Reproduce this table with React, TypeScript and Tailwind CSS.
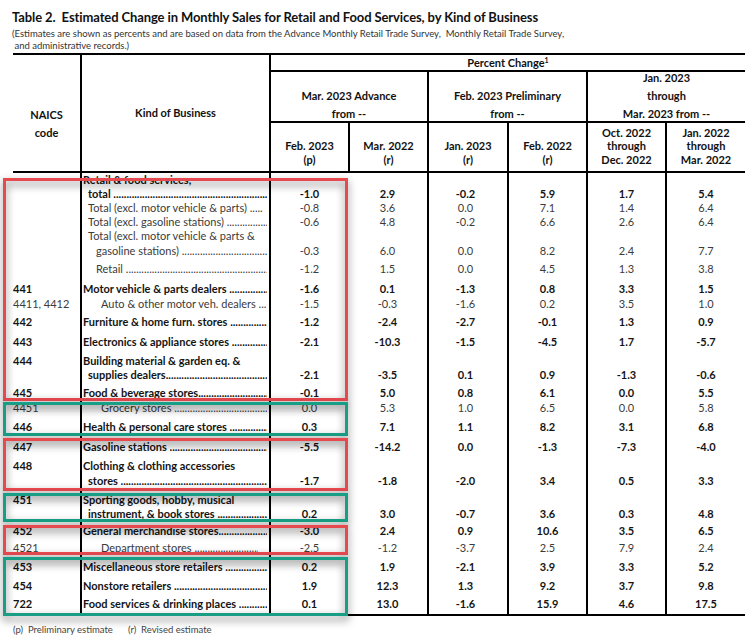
import React from "react";

const COLS = "grid grid-cols-[67px_189px_79px_79px_80px_79px_79px_80px]";

type Line = { t: string; i: number; fill?: boolean; pr?: string };
type Row = {
  h: string;
  lh: string;
  code?: string;
  lines: Line[];
  vals?: string[];
  bold?: boolean;
};

const indent: Record<number, string> = {
  0: "pl-px",
  1: "pl-[6px]",
  2: "pl-[14px]",
  3: "pl-[19px]",
};

const rows: Row[] = [
  { h: "h-[14px]", lh: "leading-[14px]", bold: true, lines: [{ t: "Retail & food services,", i: 0 }] },
  { h: "h-[14px]", lh: "leading-[14px]", bold: true, lines: [{ t: "total ", i: 1, fill: true }], vals: ["-1.0", "2.9", "-0.2", "5.9", "1.7", "5.4"] },
  { h: "h-[13px]", lh: "leading-[13px]", lines: [{ t: "Total (excl. motor vehicle & parts) .....", i: 1 }], vals: ["-0.8", "3.6", "0.0", "7.1", "1.4", "6.4"] },
  { h: "h-[15px]", lh: "leading-[15px]", lines: [{ t: "Total (excl. gasoline stations) ", i: 1, fill: true }], vals: ["-0.6", "4.8", "-0.2", "6.6", "2.6", "6.4"] },
  {
    h: "h-[29px]",
    lh: "leading-[14.5px]",
    lines: [
      { t: "Total (excl. motor vehicle & parts &", i: 1 },
      { t: "gasoline stations) ", i: 2, fill: true },
    ],
    vals: ["-0.3", "6.0", "0.0", "8.2", "2.4", "7.7"],
  },
  { h: "h-[22px]", lh: "leading-[14px]", lines: [{ t: "Retail ", i: 2, fill: true }], vals: ["-1.2", "1.5", "0.0", "4.5", "1.3", "3.8"] },
  { h: "h-[17px]", lh: "leading-[14px]", bold: true, code: "441", lines: [{ t: "Motor vehicle & parts dealers ", i: 0, fill: true }], vals: ["-1.6", "0.1", "-1.3", "0.8", "3.3", "1.5"] },
  { h: "h-[13px]", lh: "leading-[13px]", code: "4411, 4412", lines: [{ t: "Auto & other motor veh. dealers ...", i: 3 }], vals: ["-1.5", "-0.3", "-1.6", "0.2", "3.5", "1.0"] },
  { h: "h-[23px]", lh: "leading-[14px]", bold: true, code: "442", lines: [{ t: "Furniture & home furn. stores ", i: 0, fill: true }], vals: ["-1.2", "-2.4", "-2.7", "-0.1", "1.3", "0.9"] },
  { h: "h-[18px]", lh: "leading-[14px]", bold: true, code: "443", lines: [{ t: "Electronics & appliance stores ", i: 0, fill: true }], vals: ["-2.1", "-10.3", "-1.5", "-4.5", "1.7", "-5.7"] },
  {
    h: "h-[33px]",
    lh: "leading-[13.5px]",
    bold: true,
    code: "444",
    lines: [
      { t: "Building material & garden eq. &", i: 0 },
      { t: "supplies dealers", i: 1, fill: true },
    ],
    vals: ["-2.1", "-3.5", "0.1", "0.9", "-1.3", "-0.6"],
  },
  { h: "h-[18px]", lh: "leading-[14px]", bold: true, code: "445", lines: [{ t: "Food & beverage stores", i: 0, fill: true }], vals: ["-0.1", "5.0", "0.8", "6.1", "0.0", "5.5"] },
  { h: "h-[12px]", lh: "leading-[12px]", code: "4451", lines: [{ t: "Grocery stores ", i: 3, fill: true }], vals: ["0.0", "5.3", "1.0", "6.5", "0.0", "5.8"] },
  { h: "h-[26px]", lh: "leading-[14px]", bold: true, code: "446", lines: [{ t: "Health & personal care stores ", i: 0, fill: true }], vals: ["0.3", "7.1", "1.1", "8.2", "3.1", "6.8"] },
  { h: "h-[14px]", lh: "leading-[14px]", bold: true, code: "447", lines: [{ t: "Gasoline stations ", i: 0, fill: true }], vals: ["-5.5", "-14.2", "0.0", "-1.3", "-7.3", "-4.0"] },
  {
    h: "h-[39px]",
    lh: "leading-[14.5px]",
    bold: true,
    code: "448",
    lines: [
      { t: "Clothing & clothing accessories", i: 0 },
      { t: "stores ", i: 1, fill: true },
    ],
    vals: ["-1.7", "-1.8", "-2.0", "3.4", "0.5", "3.3"],
  },
  {
    h: "h-[27px]",
    lh: "leading-[14px]",
    bold: true,
    code: "451",
    lines: [
      { t: "Sporting goods, hobby, musical", i: 0 },
      { t: "instrument, & book stores ", i: 1, fill: true },
    ],
    vals: ["0.2", "3.0", "-0.7", "3.6", "0.3", "4.8"],
  },
  { h: "h-[21px]", lh: "leading-[14px]", bold: true, code: "452", lines: [{ t: "General merchandise stores", i: 0, fill: true }], vals: ["-3.0", "2.4", "0.9", "10.6", "3.5", "6.5"] },
  { h: "h-[14px]", lh: "leading-[14px]", code: "4521", lines: [{ t: "Department stores ", i: 3, fill: true, pr: "pr-[9px]" }], vals: ["-2.5", "-1.2", "-3.7", "2.5", "7.9", "2.4"] },
  { h: "h-[24px]", lh: "leading-[14px]", bold: true, code: "453", lines: [{ t: "Miscellaneous store retailers ", i: 0, fill: true }], vals: ["0.2", "1.9", "-2.1", "3.9", "3.3", "5.2"] },
  { h: "h-[14px]", lh: "leading-[14px]", bold: true, code: "454", lines: [{ t: "Nonstore retailers ", i: 0, fill: true }], vals: ["1.9", "12.3", "1.3", "9.2", "3.7", "9.8"] },
  { h: "h-[21px]", lh: "leading-[14px]", bold: true, code: "722", lines: [{ t: "Food services & drinking places ", i: 0, fill: true }], vals: ["0.1", "13.0", "-1.6", "15.9", "4.6", "17.5"] },
];

const DOTS = ".".repeat(90);

// vertical rule for each of the 8 body columns (no rule between the two Advance columns)
const bodyRule = ["", "border-l-2", "border-l-2", "", "border-l-2", "border-l-2", "border-l-2", "border-l-2"];

function BodyRow({ row }: { row: Row }) {
  const n = row.lines.length;
  const slots = Array.from({ length: n });
  const tone = row.bold ? "font-bold text-[#141414]" : "text-[#3b3b3b]";
  return (
    <div className={`${COLS} ${row.h} ${tone} ${row.lh}`}>
      {/* code */}
      <div className="flex flex-col justify-center">
        {slots.map((_, k) => (
          <div key={k} className="whitespace-nowrap">
            {k === 0 ? row.code ?? "\u00a0" : "\u00a0"}
          </div>
        ))}
      </div>
      {/* label */}
      <div className="flex flex-col justify-center border-l-2 border-black pr-[2px] min-w-0">
        {row.lines.map((l, k) => (
          <div key={k} className={`flex ${indent[l.i]} ${l.pr ?? ""} min-w-0`}>
            <span className="whitespace-pre">{l.t}</span>
            {l.fill && <span className="flex-1 overflow-hidden whitespace-nowrap">{DOTS}</span>}
          </div>
        ))}
      </div>
      {/* values */}
      {[0, 1, 2, 3, 4, 5].map((c) => (
        <div key={c} className={`flex flex-col justify-center border-black text-center ${bodyRule[c + 2]}`}>
          {slots.map((_, k) => (
            <div key={k} className={c === 2 ? "pr-[5px]" : ""}>
              {k === n - 1 && row.vals ? row.vals[c] : "\u00a0"}
            </div>
          ))}
        </div>
      ))}
    </div>
  );
}

function Header() {
  return (
    <div className={`${COLS} grid-rows-[17px_51px_48px] border-y-2 border-black font-bold text-[11px] text-[#111] text-center`}>
      <div className="row-span-3 flex flex-col justify-center pt-[22px] leading-[18px]">
        <div>NAICS</div>
        <div>code</div>
      </div>
      <div className="row-span-3 border-l-2 border-black flex items-center justify-center">Kind of Business</div>
      <div className="col-span-6 border-l-2 border-b-2 border-black leading-[15px]">
        Percent Change<span className="relative -top-[4px] text-[7px]">1</span>
      </div>
      <div className="col-span-2 border-l-2 border-b-2 border-black flex flex-col justify-end gap-[4px] leading-[14px]">
        <div>Mar. 2023 Advance</div>
        <div>from --</div>
      </div>
      <div className="col-span-2 border-l-2 border-b-2 border-black flex flex-col justify-end gap-[4px] leading-[14px]">
        <div>Feb. 2023 Preliminary</div>
        <div>from --</div>
      </div>
      <div className="col-span-2 border-l-2 border-b-2 border-black flex flex-col justify-end gap-[4px] leading-[14px]">
        <div>Jan. 2023</div>
        <div>through</div>
        <div>Mar. 2023 from --</div>
      </div>
      {[
        ["Feb. 2023", "(p)"],
        ["Mar. 2022", "(r)"],
        ["Jan. 2023", "(r)"],
        ["Feb. 2022", "(r)"],
        ["Oct. 2022", "through", "Dec. 2022"],
        ["Jan. 2022", "through", "Mar. 2022"],
      ].map((cell, k) => (
        <div key={k} className="border-l-2 border-black flex flex-col justify-end leading-[13.5px] pb-[5px]">
          {cell.map((t) => (
            <div key={t}>{t}</div>
          ))}
        </div>
      ))}
    </div>
  );
}

const boxes = [
  { top: "top-[178px]", h: "h-[223px]", c: "border-[#e6494e]" },
  { top: "top-[402px]", h: "h-[34px]", c: "border-[#179e84]" },
  { top: "top-[438px]", h: "h-[53px]", c: "border-[#e6494e]" },
  { top: "top-[493px]", h: "h-[29px]", c: "border-[#179e84]" },
  { top: "top-[525px]", h: "h-[30px]", c: "border-[#e6494e]" },
  { top: "top-[557px]", h: "h-[59px]", c: "border-[#179e84]" },
];

export default function App() {
  return (
    <div className="relative w-[756px] h-[642px] bg-white overflow-hidden font-['Lato',sans-serif] text-black">
      <div className="pt-[8px] pl-[12px]">
        <h1 className="text-[13px] leading-[18px] tracking-[-0.1px] font-bold text-[#111] whitespace-pre">
          Table 2.  Estimated Change in Monthly Sales for Retail and Food Services, by Kind of Business
        </h1>
        <p className="mt-[2px] text-[9.5px] leading-[12px] text-[#333] whitespace-pre">
          {"(Estimates are shown as percents and are based on data from the Advance Monthly Retail Trade Survey,  Monthly Retail Trade Survey,\n and administrative records.)"}
        </p>
      </div>

      <div className="ml-[13px] mt-[1px] w-[732px]">
        <Header />
        <div className="text-[11px] border-b-2 border-black">
          {rows.map((r, k) => (
            <BodyRow key={k} row={r} />
          ))}
        </div>
        <div className="mt-[7px] flex text-[9.5px] leading-[14px] text-[#444] whitespace-pre">
          <span className="w-[115px]">(p)  Preliminary estimate</span>
          <span>(r)  Revised estimate</span>
        </div>
      </div>

      {boxes.map((b, k) => (
        <div
          key={k}
          className={`absolute left-[3px] w-[345px] ${b.top} ${b.h} border-[3px] ${b.c} drop-shadow-[0_4px_4px_rgba(0,0,0,0.55)]`}
        />
      ))}
    </div>
  );
}
